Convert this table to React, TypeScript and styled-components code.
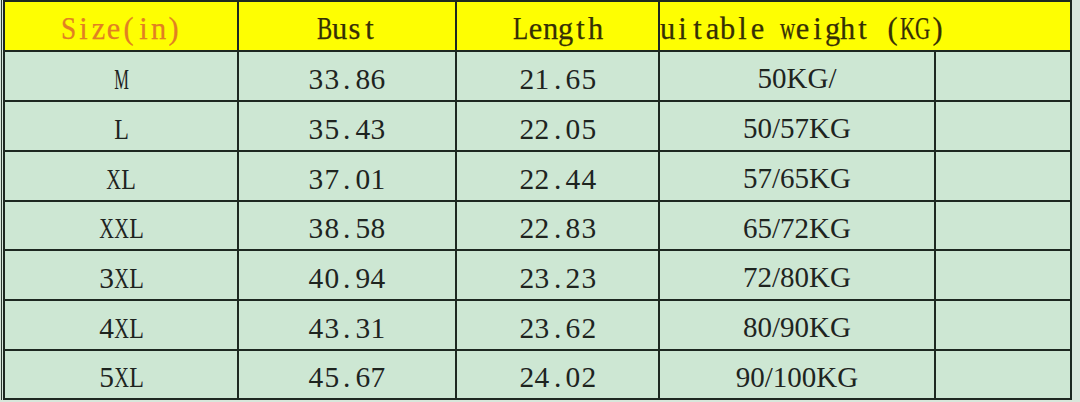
import React from "react";
import styled, { createGlobalStyle } from "styled-components";

const GlobalStyle = createGlobalStyle`
  html, body { margin: 0; padding: 0; background: #d8e7db; }
  #root { width: 1080px; height: 402px; overflow: hidden; }
`;

const Page = styled.div`
  width: 1080px;
  height: 402px;
  box-sizing: border-box;
  padding-left: 1px;
  background: #d8e7db;
`;

const Frame = styled.div`
  display: inline-block;
  border-left: 1px solid #2c3a30;
  padding-left: 1px;
`;

const Grid = styled.div`
  display: grid;
  grid-template-columns: 232px 216px 201px 274px 134px;
  grid-template-rows: 48px 48px 48px 48px 47px 48px 48px 47px;
  gap: 2px;
  padding: 2px;
  background: #1d2820;
  width: fit-content;
`;

const HeaderCell = styled.div<{ $accent?: boolean; $span?: number; $start?: boolean }>`
  grid-column: span ${(p) => p.$span ?? 1};
  background: #fefe02;
  display: flex;
  align-items: center;
  justify-content: ${(p) => (p.$start ? "flex-start" : "center")};
  overflow: hidden;
  white-space: nowrap;
  padding-top: 5px;
  box-sizing: border-box;
  font-family: "Liberation Serif", serif;
  font-size: 31px;
  -webkit-text-stroke: 0.25px currentColor;
  color: ${(p) => (p.$accent ? "#e27f22" : "#362f05")};
`;

const Cell = styled.div<{ $kind: "mono" | "serif" }>`
  background: #cde7d3;
  display: flex;
  align-items: center;
  justify-content: center;
  white-space: nowrap;
  padding-top: 5px;
  box-sizing: border-box;
  color: #1e241f;
  font-family: "Liberation Serif", serif;
  font-size: ${(p) => (p.$kind === "mono" ? "30px" : "29px")};
`;

const MonoRun = styled.span<{ $shift?: number }>`
  display: inline-flex;
  margin-left: ${(p) => p.$shift ?? 0}px;
`;

const Glyph = styled.span<{ $w: number; $sx: number }>`
  display: inline-flex;
  justify-content: center;
  width: ${(p) => p.$w}px;
  transform: scaleX(${(p) => p.$sx});
`;

const WIDE: Record<string, number> = {
  M: 0.889, X: 0.722, L: 0.611, K: 0.722, G: 0.722, S: 0.556, B: 0.667,
  w: 0.722, m: 0.778,
};

function Mono({ text, cell, shift }: { text: string; cell: number; shift?: number }) {
  return (
    <MonoRun $shift={shift}>
      {Array.from(text).map((ch, i) => {
        const w = WIDE[ch] ?? 0.5;
        const sx = Math.min(1, 0.49 / w);
        return (
          <Glyph key={i} $w={cell} $sx={sx}>
            {ch === " " ? "\u00a0" : ch}
          </Glyph>
        );
      })}
    </MonoRun>
  );
}

const rows: [string, string, string, string][] = [
  ["M", "33.86", "21.65", "50KG/"],
  ["L", "35.43", "22.05", "50/57KG"],
  ["XL", "37.01", "22.44", "57/65KG"],
  ["XXL", "38.58", "22.83", "65/72KG"],
  ["3XL", "40.94", "23.23", "72/80KG"],
  ["4XL", "43.31", "23.62", "80/90KG"],
  ["5XL", "45.67", "24.02", "90/100KG"],
];

export default function App() {
  return (
    <Page>
      <GlobalStyle />
      <Frame>
        <Grid>
          <HeaderCell $accent>
            <Mono text="Size(in)" cell={15} />
          </HeaderCell>
          <HeaderCell>
            <Mono text="Bust" cell={15} />
          </HeaderCell>
          <HeaderCell>
            <Mono text="Length" cell={15} />
          </HeaderCell>
          <HeaderCell $span={2} $start>
            <Mono text="Suitable weight (KG)" cell={15} shift={-15} />
          </HeaderCell>
          {rows.map((r) => (
            <React.Fragment key={r[0]}>
              <Cell $kind="mono">
                <Mono text={r[0]} cell={15} />
              </Cell>
              <Cell $kind="mono">
                <Mono text={r[1]} cell={15.5} />
              </Cell>
              <Cell $kind="mono">
                <Mono text={r[2]} cell={15.5} />
              </Cell>
              <Cell $kind="serif">{r[3]}</Cell>
              <Cell $kind="serif" />
            </React.Fragment>
          ))}
        </Grid>
      </Frame>
    </Page>
  );
}
